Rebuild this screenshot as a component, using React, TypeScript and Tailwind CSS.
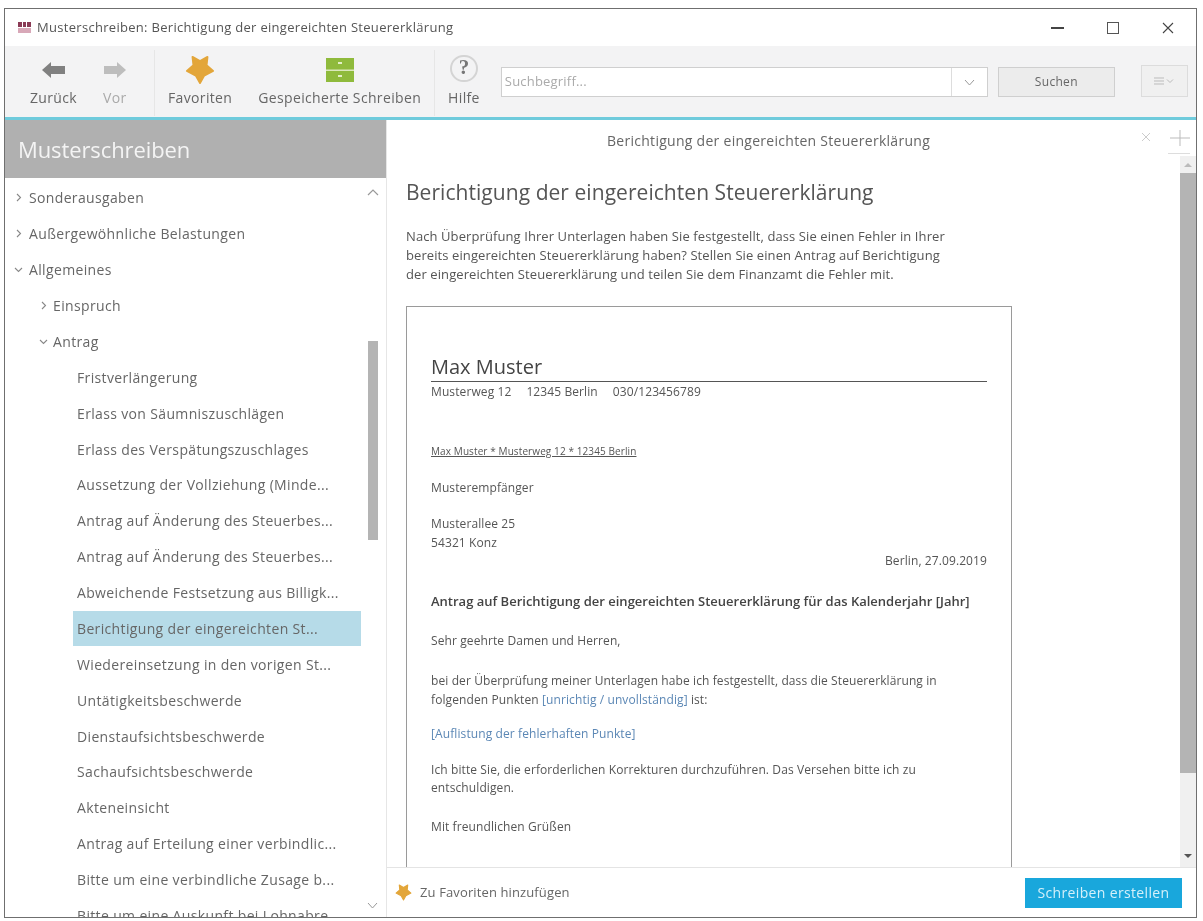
import React from "react";

const font = { fontFamily: '"Open Sans", "Liberation Sans", sans-serif' };

function Star({ size }: { size: number }) {
  return (
    <svg width={size} height={size} viewBox="0 0 32 32">
      <path d="M16 30 L11.5 22 L2 17 L9 11 L8 2 L16 6.5 L24 2 L23 11 L30 17 L20.5 22 Z" fill="#e3a63a" stroke="#e3a63a" strokeWidth="2" strokeLinejoin="round" />
    </svg>
  );
}

function ToolButton({ label, muted, children }: { label: string; muted?: boolean; children: React.ReactNode }) {
  return (
    <div className="flex flex-col items-center">
      <div className="flex h-[39px] items-center justify-center">{children}</div>
      <span className={`text-[14px] leading-[18px] tracking-[0.35px] ${muted ? "text-[#aaaaaa]" : "text-[#666666]"}`}>{label}</span>
    </div>
  );
}

const rows: { label: string; level: 0 | 1 | 2; open?: boolean; selected?: boolean }[] = [
  { label: "Sonderausgaben", level: 0 },
  { label: "Außergewöhnliche Belastungen", level: 0 },
  { label: "Allgemeines", level: 0, open: true },
  { label: "Einspruch", level: 1 },
  { label: "Antrag", level: 1, open: true },
  { label: "Fristverlängerung", level: 2 },
  { label: "Erlass von Säumniszuschlägen", level: 2 },
  { label: "Erlass des Verspätungszuschlages", level: 2 },
  { label: "Aussetzung der Vollziehung (Minde...", level: 2 },
  { label: "Antrag auf Änderung des Steuerbes...", level: 2 },
  { label: "Antrag auf Änderung des Steuerbes...", level: 2 },
  { label: "Abweichende Festsetzung aus Billigk...", level: 2 },
  { label: "Berichtigung der eingereichten St...", level: 2, selected: true },
  { label: "Wiedereinsetzung in den vorigen St...", level: 2 },
  { label: "Untätigkeitsbeschwerde", level: 2 },
  { label: "Dienstaufsichtsbeschwerde", level: 2 },
  { label: "Sachaufsichtsbeschwerde", level: 2 },
  { label: "Akteneinsicht", level: 2 },
  { label: "Antrag auf Erteilung einer verbindlic...", level: 2 },
  { label: "Bitte um eine verbindliche Zusage b...", level: 2 },
  { label: "Bitte um eine Auskunft bei Lohnabre...", level: 2 },
];

function Caret({ open }: { open?: boolean }) {
  return (
    <svg width="9" height="9" viewBox="0 0 9 9" className="shrink-0" fill="none" stroke="#888888" strokeWidth="1.1">
      {open ? <path d="M1 3 L4.5 6.5 L8 3" /> : <path d="M3 1 L6.5 4.5 L3 8" />}
    </svg>
  );
}

function Row({ label, level, open, selected }: (typeof rows)[number]) {
  if (level === 2) {
    return (
      <div className={`ml-[68px] flex h-[35.88px] w-[288px] shrink-0 items-center whitespace-nowrap pl-[4px] text-[14px] tracking-[0.35px] text-[#666666] ${selected ? "bg-[#b6dbe8] text-[#444444]" : ""}`}>
        {label}
      </div>
    );
  }
  return (
    <div className={`flex h-[35.88px] shrink-0 items-center whitespace-nowrap text-[14px] tracking-[0.35px] text-[#666666] ${level === 1 ? "gap-[5px] pl-[34px]" : "gap-[6px] pl-[9px]"}`}>
      <Caret open={open} />
      <span>{label}</span>
    </div>
  );
}

export default function App() {
  return (
    <div style={font} className="h-[921px] w-[1203px] overflow-hidden bg-white pb-[3px] pl-[4px] pr-[6px] pt-[8px] blur-[0.4px]">
      <div className="flex h-full flex-col overflow-hidden border border-[#6f6f6f] bg-white">
        {/* Title bar */}
        <div className="flex h-[37px] shrink-0 items-center pl-[12px] text-[13px] text-[#555555]">
          <svg width="15" height="13" viewBox="0 0 15 13" className="mr-[5px]">
            <rect x="1" y="1" width="13" height="5" fill="#8a3a55" />
            <rect x="1" y="7" width="13" height="5" fill="#d8a8b8" />
            <rect x="5" y="1" width="1" height="5" fill="#ffffff" />
            <rect x="9" y="1" width="1" height="5" fill="#ffffff" />
          </svg>
          <span className="tracking-[0.3px]">Musterschreiben: Berichtigung der eingereichten Steuererklärung</span>
          <div className="ml-auto flex items-center">
            <div className="mr-[43px] h-[2px] w-[13px] bg-[#444444]" />
            <div className="mr-[43px] h-[12px] w-[12px] border border-[#555555]" />
            <svg width="12" height="12" viewBox="0 0 12 12" className="mr-[22px]" stroke="#444444" strokeWidth="1.1">
              <path d="M1 1 L11 11 M11 1 L1 11" />
            </svg>
          </div>
        </div>

        {/* Toolbar */}
        <div className="flex h-[71px] shrink-0 items-start bg-[#f3f3f4] pt-[4px]">
          <div className="flex w-[149px] shrink-0 gap-[26px] pl-[25px]">
            <ToolButton label="Zurück">
              <svg width="24" height="16" viewBox="0 0 24 16"><path d="M0 8 L9 0 V4 H23 V12 H9 V16 Z" fill="#808080" /></svg>
            </ToolButton>
            <ToolButton label="Vor" muted>
              <svg width="22" height="16" viewBox="0 0 22 16"><path d="M22 8 L13 0 V4 H0 V12 H13 V16 Z" fill="#bdbdbd" /></svg>
            </ToolButton>
          </div>
          <div className="h-[66px] w-px bg-[#e6e6e6]" />
          <div className="flex gap-[26px] pl-[13px] pr-[13px]">
            <ToolButton label="Favoriten">
              <Star size={30} />
            </ToolButton>
            <ToolButton label="Gespeicherte Schreiben">
              <svg width="28" height="24" viewBox="0 0 28 24">
                <rect width="28" height="24" fill="#8fba3c" />
                <rect y="11.5" width="28" height="1.5" fill="#dbe8bc" />
                <rect x="12" y="4" width="4" height="2" fill="#e4efc8" />
                <rect x="12" y="17" width="4" height="2" fill="#e4efc8" />
              </svg>
            </ToolButton>
          </div>
          <div className="h-[66px] w-px bg-[#e6e6e6]" />
          <div className="pl-[13px]">
            <ToolButton label="Hilfe">
              <div className="mb-[3px] flex h-[27px] w-[28px] items-center justify-center rounded-full border-2 border-[#d4d4d4] text-[21px] font-bold text-[#777777]" style={{ fontFamily: '"Liberation Serif", serif' }}>?</div>
            </ToolButton>
          </div>
          <div className="ml-[21px] mt-[17px] flex h-[30px] w-[487px] border border-[#cfcfcf] bg-white">
            <span className="flex items-center pl-[3px] text-[13px] tracking-[0.2px] text-[#aaaaaa]">Suchbegriff...</span>
            <div className="ml-auto flex w-[36px] items-center justify-center border-l border-[#dddddd]">
              <svg width="11" height="7" viewBox="0 0 11 7" fill="none" stroke="#999999"><path d="M1 1 L5.5 6 L10 1" /></svg>
            </div>
          </div>
          <div className="ml-[10px] mt-[17px] flex h-[30px] w-[117px] items-center justify-center border border-[#cfcfcf] bg-[#ececec] text-[12px] tracking-[0.3px] text-[#666666]">Suchen</div>
          <div className="ml-[26px] mt-[15px] flex h-[32px] w-[47px] items-center justify-center gap-[3px] border border-[#dcdcdc] bg-[#f0f0f0]">
            <svg width="20" height="8" viewBox="0 0 20 8" fill="none" stroke="#bbbbbb"><path d="M0 1 H10 M0 4 H10 M0 7 H10 M13 2.5 L16 5.5 L19 2.5" /></svg>
          </div>
        </div>
        <div className="h-[3px] shrink-0 bg-[#6fcbdc]" />

        {/* Body */}
        <div className="flex min-h-0 flex-1">
          {/* Sidebar */}
          <div className="flex w-[381px] shrink-0 flex-col">
            <div className="flex h-[58px] shrink-0 items-center bg-[#b0b0b0] pl-[13px] text-[22px] tracking-[-0.1px] text-[#f4f4f4]">Musterschreiben</div>
            <div className="relative min-h-0 flex-1 overflow-hidden pt-[2px]">
              {rows.map((r, i) => (
                <Row key={i} {...r} />
              ))}
              <svg width="12" height="7" viewBox="0 0 12 7" fill="none" stroke="#999999" strokeWidth="1.2" className="absolute left-[362px] top-[11px]"><path d="M1 6 L6 1 L11 6" /></svg>
              <div className="absolute left-[363px] top-[163px] h-[199px] w-[10px] bg-[#b4b4b4]" />
              <svg width="11" height="7" viewBox="0 0 11 7" fill="none" stroke="#999999" className="absolute left-[362px] top-[724px]"><path d="M1 1 L5.5 6 L10 1" /></svg>
            </div>
          </div>

          {/* Main */}
          <div className="flex min-w-0 flex-1 flex-col border-l border-[#e6e6e6]">
            <div className="relative flex h-[36px] shrink-0 items-center justify-center pr-[46px] pt-[4px] text-[14px] tracking-[0.28px] text-[#666666]">
              Berichtigung der eingereichten Steuererklärung
              <svg width="10" height="10" viewBox="0 0 10 10" stroke="#cccccc" className="absolute right-[45px] top-[12px]"><path d="M1 1 L9 9 M9 1 L1 9" /></svg>
              <svg width="20" height="16" viewBox="0 0 20 16" stroke="#bbbbbb" className="absolute right-[6px] top-[10px]"><path d="M10 0 V16 M0 8 H20" /></svg>
              <div className="absolute bottom-[2px] right-[6px] h-px w-[22px] bg-[#dddddd]" />
            </div>
            <div className="flex min-h-0 flex-1">
              <div className="min-w-0 flex-1 overflow-hidden pl-[19px] text-[#555555]">
                <h1 className="mt-[21px] text-[21px] font-normal leading-[30px] tracking-[0.05px] text-[#555555]">Berichtigung der eingereichten Steuererklärung</h1>
                <p className="mt-[20px] w-[548px] text-[13px] leading-[19px] tracking-[0.09px] text-[#555555]">
                  Nach Überprüfung Ihrer Unterlagen haben Sie festgestellt, dass Sie einen Fehler in Ihrer bereits eingereichten Steuererklärung haben? Stellen Sie einen Antrag auf Berichtigung der eingereichten Steuererklärung und teilen Sie dem Finanzamt die Fehler mit.
                </p>
                <div className="mt-[22px] h-[600px] w-[606px] border border-[#9a9a9a] px-[24px] pt-[46px] text-[12px] leading-[18px] tracking-[0.1px] text-[#555555]">
                  <div className="border-b border-[#555555] text-[20px] leading-[28px] tracking-normal text-[#444444]">Max Muster</div>
                  <div className="mt-[1px] flex gap-[15px]">
                    <span>Musterweg 12</span>
                    <span>12345 Berlin</span>
                    <span>030/123456789</span>
                  </div>
                  <div className="mt-[41px] text-[10px] underline">Max Muster * Musterweg 12 * 12345 Berlin</div>
                  <div className="mt-[19px]">Musterempfänger</div>
                  <div className="mt-[18px]">Musterallee 25</div>
                  <div className="mt-[1px]">54321 Konz</div>
                  <div className="text-right">Berlin, 27.09.2019</div>
                  <div className="mt-[22px] text-[13px] font-semibold tracking-normal text-[#444444]">Antrag auf Berichtigung der eingereichten Steuererklärung für das Kalenderjahr [Jahr]</div>
                  <div className="mt-[22px]">Sehr geehrte Damen und Herren,</div>
                  <div className="mt-[21px] w-[510px] leading-[19px]">
                    bei der Überprüfung meiner Unterlagen habe ich festgestellt, dass die Steuererklärung in folgenden Punkten <span className="text-[#5b87b5]">[unrichtig / unvollständig]</span> ist:
                  </div>
                  <div className="mt-[16px] text-[#5b87b5]">[Auflistung der fehlerhaften Punkte]</div>
                  <div className="mt-[18px] w-[510px]">Ich bitte Sie, die erforderlichen Korrekturen durchzuführen. Das Versehen bitte ich zu entschuldigen.</div>
                  <div className="mt-[21px]">Mit freundlichen Grüßen</div>
                </div>
              </div>
              {/* Scrollbar */}
              <div className="flex w-[16px] shrink-0 flex-col items-center bg-[#f0f0f0]">
                <div className="flex h-[17px] items-center"><div className="h-0 w-0 border-x-[4px] border-b-[4px] border-x-transparent border-b-[#bbbbbb]" /></div>
                <div className="h-[600px] w-full bg-[#b4b4b4]" />
                <div className="mt-auto flex h-[22px] items-center"><div className="h-0 w-0 border-x-[4px] border-t-[4px] border-x-transparent border-t-[#555555]" /></div>
              </div>
            </div>
            {/* Footer */}
            <div className="flex h-[50px] shrink-0 items-center border-t border-[#e4e4e4] pl-[8px] pr-[14px]">
              <Star size={17} />
              <span className="ml-[8px] text-[13px] tracking-[0.12px] text-[#666666]">Zu Favoriten hinzufügen</span>
              <div className="ml-auto flex h-[30px] w-[157px] items-center justify-center bg-[#19a7dc] text-[14px] tracking-[0.35px] text-[#d4f0fa]">Schreiben erstellen</div>
            </div>
          </div>
        </div>
      </div>
    </div>
  );
}
